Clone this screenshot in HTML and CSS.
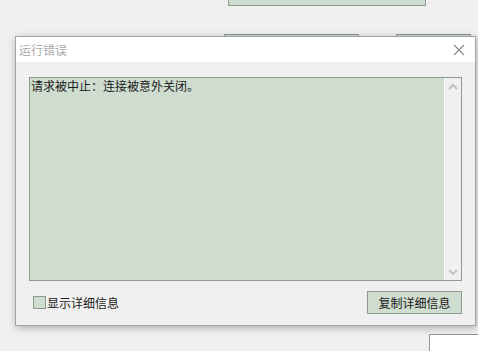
FILE: index.html
```html
<!DOCTYPE html>
<html lang="zh">
<head>
<meta charset="utf-8">
<link rel="stylesheet" href="styles.css">
</head>
<body>
<div class="desk">
  <div class="bg-box bg-top"></div>
  <div class="bg-box bg-mid"></div>
  <div class="bg-box bg-right"></div>
  <div class="bg-white"></div>

  <div class="dialog">
    <div class="titlebar">
      <span class="title">运行错误</span>
      <svg class="close" width="12" height="12" viewBox="0 0 12 12"><path d="M1 1 L11 11 M11 1 L1 11" stroke="#8a8a8a" stroke-width="1.1" fill="none"/></svg>
    </div>
    <div class="body">
      <div class="textbox">
        <div class="text">请求被中止：连接被意外关闭。</div>
        <div class="scroll">
          <svg width="10" height="7" viewBox="0 0 10 7"><path d="M1 6 L5 2 L9 6" stroke="#c2c2c2" stroke-width="2" fill="none"/></svg>
          <svg width="10" height="7" viewBox="0 0 10 7"><path d="M1 1 L5 5 L9 1" stroke="#c2c2c2" stroke-width="2" fill="none"/></svg>
        </div>
      </div>
      <div class="footer">
        <label class="check"><span class="box"></span>显示详细信息</label>
        <button class="btn">复制详细信息</button>
      </div>
    </div>
  </div>
</div>
</body>
</html>
```
FILE: styles.css
```css
html, body {
  margin: 0;
  padding: 0;
  background: #f0f0f0;
  font-family: "Noto Sans CJK SC", "Noto Sans", sans-serif;
  font-size: 12px;
  color: #1a1a1a;
}
.desk {
  position: relative;
  width: 478px;
  height: 351px;
  overflow: hidden;
}
.bg-box {
  position: absolute;
  background: #cfdcd0;
  border: 1px solid #8c9c8c;
  box-sizing: border-box;
}
.bg-top { left: 228px; top: -10px; width: 198px; height: 16px; }
.bg-mid { left: 224px; top: 34px; width: 135px; height: 20px; }
.bg-right { left: 396px; top: 34px; width: 75px; height: 20px; }
.bg-white {
  position: absolute;
  left: 429px; top: 334px;
  width: 60px; height: 30px;
  background: #fff;
  border: 1px solid #8c9c8c;
  box-sizing: border-box;
}
.dialog {
  position: absolute;
  left: 15px;
  top: 36px;
  width: 461px;
  height: 290px;
  box-sizing: border-box;
  border: 1px solid #a3a3a3;
  background: #f0f0f0;
  box-shadow: 1px 2px 8px rgba(0,0,0,0.28);
  display: flex;
  flex-direction: column;
}
.titlebar {
  height: 25px;
  background: #fff;
  display: flex;
  align-items: center;
  justify-content: space-between;
  padding: 0 10px 0 3px;
  flex-shrink: 0;
}
.title {
  color: #aaaaaa;
  font-size: 12px;
}
.close { display: block; }
.body {
  flex: 1;
  padding: 15px 13px 0 13px;
  display: flex;
  flex-direction: column;
}
.textbox {
  height: 204px;
  box-sizing: border-box;
  border: 1px solid #8c9c8c;
  background: #cfdcd0;
  display: flex;
}
.text {
  flex: 1;
  padding: 1px 0 0 1px;
  line-height: 14px;
}
.scroll {
  width: 16px;
  background: #f0f0f0;
  border-left: 1px solid #ffffff;
  display: flex;
  flex-direction: column;
  justify-content: space-between;
  align-items: center;
  padding: 5px 0 4px;
}
.scroll svg { display: block; }
.footer {
  display: flex;
  justify-content: space-between;
  align-items: center;
  margin-top: 10px;
  padding-left: 4px;
}
.check {
  display: flex;
  align-items: center;
  gap: 1px;
  font-size: 12px;
}
.box {
  width: 13px;
  height: 13px;
  box-sizing: border-box;
  border: 1px solid #8c9c8c;
  background: #cfdcd0;
}
.btn {
  width: 95px;
  height: 23px;
  box-sizing: border-box;
  border: 1px solid #8c9c8c;
  background: #cfdcd0;
  font-family: inherit;
  font-size: 12px;
  color: #1a1a1a;
  padding: 0;
  margin: 0;
}
```
